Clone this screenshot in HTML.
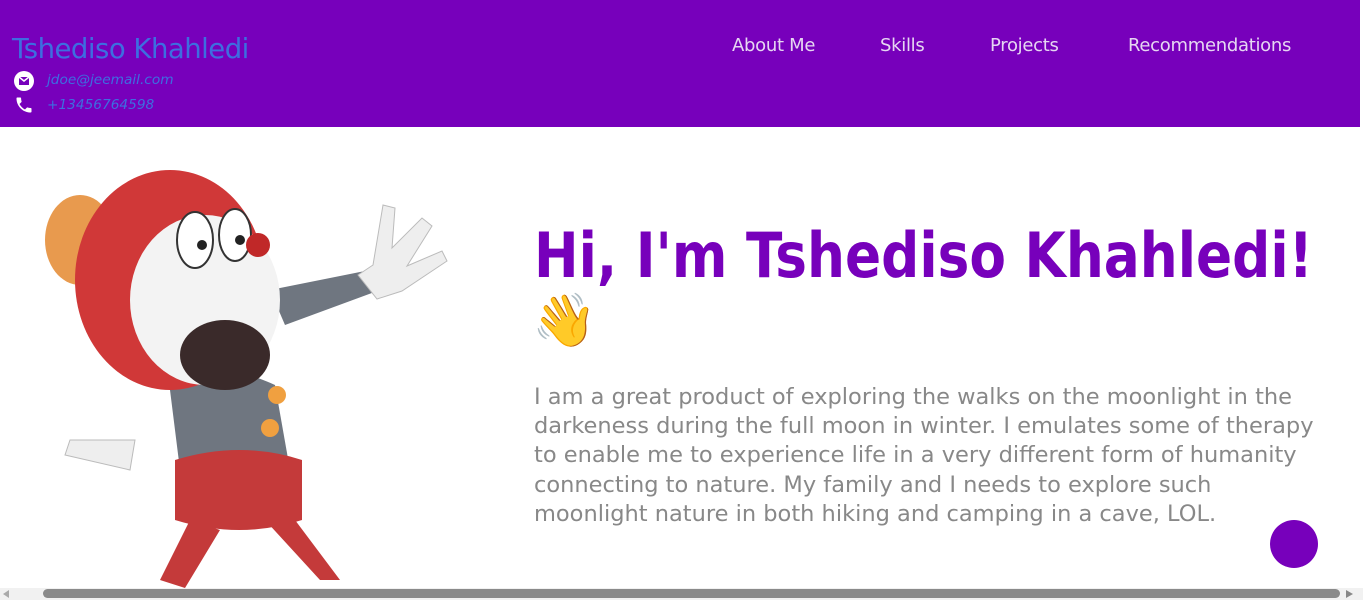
<!DOCTYPE html>
<html><head><meta charset="utf-8"><style>
*{margin:0;padding:0;box-sizing:border-box}
body{width:1363px;height:600px;overflow:hidden;background:#fff;font-family:"DejaVu Sans","Liberation Sans",sans-serif;position:relative}
header{position:absolute;left:0;top:0;width:1360px;height:127px;background:#7700bb}
.name{position:absolute;left:12px;top:33px;font-size:27.5px;color:#3d6ee0;letter-spacing:-0.5px}
.c{position:absolute;left:47px;font-size:13.7px;font-style:italic;color:#3d6ee0}
nav a{position:absolute;top:35px;color:#e6d6f2;font-size:18px;text-decoration:none;letter-spacing:-0.3px}
h1{position:absolute;left:534px;top:220px;font-size:62px;color:#7700bb;font-weight:bold;white-space:nowrap;line-height:72px;transform:scaleX(0.86);transform-origin:0 0}
.wave{position:absolute;left:532px;top:290px;font-size:52px}
p{position:absolute;left:534px;top:383px;width:780px;font-size:22.5px;line-height:29.2px;color:#888;letter-spacing:0}
.fab{position:absolute;left:1270px;top:520px;width:48px;height:48px;border-radius:50%;background:#7700bb}
.sb{position:absolute;left:0;top:588px;width:1363px;height:12px;background:#f1f1f1}
.th{position:absolute;left:43px;top:589px;width:1297px;height:9px;border-radius:5px;background:#8a8a8a}
</style></head><body>
<header>
<div class="name">Tshediso Khahledi</div>
<svg style="position:absolute;left:14px;top:71px" width="20" height="20" viewBox="0 0 20 20"><circle cx="10" cy="10" r="10" fill="#fff"/><rect x="5" y="6" width="10" height="8" fill="#7700bb"/><path d="M5 6l5 4 5-4" stroke="#fff" stroke-width="1.5" fill="none"/></svg>
<div class="c" style="top:72px">jdoe@jeemail.com</div>
<svg style="position:absolute;left:14px;top:95px" width="20" height="20" viewBox="0 0 24 24"><path fill="#fff" d="M6.6 10.8c1.4 2.8 3.8 5.1 6.6 6.6l2.2-2.2c.3-.3.7-.4 1-.2 1.1.4 2.3.6 3.6.6.6 0 1 .4 1 1V20c0 .6-.4 1-1 1C10.6 21 3 13.4 3 4c0-.6.4-1 1-1h3.5c.6 0 1 .4 1 1 0 1.3.2 2.5.6 3.6.1.3 0 .7-.2 1L6.6 10.8z"/></svg>
<div class="c" style="top:97px">+13456764598</div>
<nav><a style="left:732px">About Me</a><a style="left:880px">Skills</a><a style="left:990px">Projects</a><a style="left:1128px">Recommendations</a></nav>
</header>
<svg style="position:absolute;left:40px;top:140px" width="420" height="448" viewBox="0 0 420 448">
<path d="M230 150 L330 130 L340 150 L245 185Z" fill="#6f7680"/>
<path d="M318 135 l15 -10 l10 -60 l12 3 l-3 40 l30 -30 l10 8 l-25 40 l35 -15 l5 10 l-45 30 l-25 8Z" fill="#eee" stroke="#bbb"/>
<path d="M95 300 L30 300 L25 315 L90 330Z" fill="#eee" stroke="#bbb"/>
<path d="M130 250 Q170 215 235 245 L250 330 Q200 350 140 330Z" fill="#6f7680"/>
<path d="M135 320 Q200 300 262 320 L262 380 Q200 400 135 380Z" fill="#c43a3a"/>
<path d="M150 380 L120 440 L145 448 L180 390Z M225 380 L280 440 L300 440 L255 380Z" fill="#c43a3a"/>
<circle cx="230" cy="288" r="9" fill="#f0a040"/><circle cx="237" cy="255" r="9" fill="#f0a040"/>
<ellipse cx="40" cy="100" rx="35" ry="45" fill="#e89a4e"/>
<ellipse cx="130" cy="140" rx="95" ry="110" fill="#d03838"/>
<ellipse cx="165" cy="160" rx="75" ry="85" fill="#f3f3f3"/>
<ellipse cx="185" cy="215" rx="45" ry="35" fill="#3a2a2a"/>
<ellipse cx="155" cy="100" rx="18" ry="28" fill="#fff" stroke="#333" stroke-width="2"/><ellipse cx="195" cy="95" rx="16" ry="26" fill="#fff" stroke="#333" stroke-width="2"/>
<circle cx="162" cy="105" r="5" fill="#222"/><circle cx="200" cy="100" r="5" fill="#222"/>
<circle cx="218" cy="105" r="12" fill="#c02828"/>
</svg>
<h1>Hi, I'm Tshediso Khahledi!</h1>
<div class="wave">👋</div>
<p>I am a great product of exploring the walks on the moonlight in the darkeness during the full moon in winter. I emulates some of therapy to enable me to experience life in a very different form of humanity connecting to nature. My family and I needs to explore such moonlight nature in both hiking and camping in a cave, LOL.</p>
<div class="fab"></div>
<div class="sb"></div><div class="th"></div>
<div style="position:absolute;left:1346px;top:590px;width:0;height:0;border-left:7px solid #888;border-top:4px solid transparent;border-bottom:4px solid transparent"></div>
<div style="position:absolute;left:3px;top:590px;width:0;height:0;border-right:6px solid #aaa;border-top:4px solid transparent;border-bottom:4px solid transparent"></div>
</body></html>
